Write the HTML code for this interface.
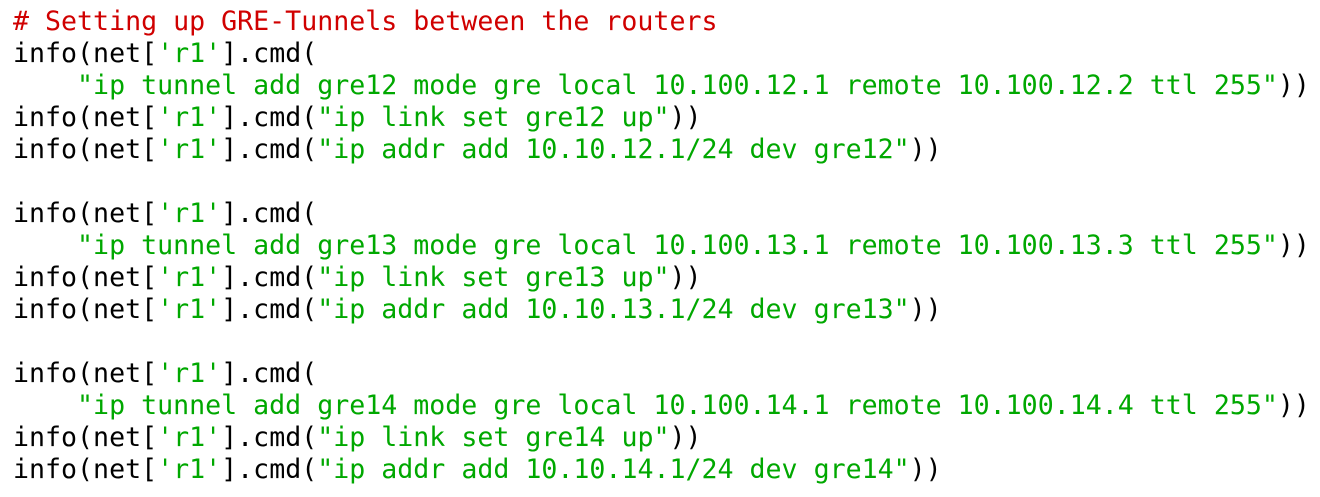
<!DOCTYPE html>
<html><head><meta charset="utf-8"><style>
html,body{margin:0;padding:0;background:#fff;width:1320px;height:497px;overflow:hidden}
pre{margin:0;position:absolute;left:13px;top:6px;font-family:"DejaVu Sans Mono","Liberation Mono",monospace;font-size:26.6px;line-height:32px;color:#000}
.c{color:#d00000}.s{color:#00a800}
</style></head><body><pre><span class="c"># Setting up GRE-Tunnels between the routers</span>
info(net[<span class="s">'r1'</span>].cmd(
    <span class="s">"ip tunnel add gre12 mode gre local 10.100.12.1 remote 10.100.12.2 ttl 255"</span>))
info(net[<span class="s">'r1'</span>].cmd(<span class="s">"ip link set gre12 up"</span>))
info(net[<span class="s">'r1'</span>].cmd(<span class="s">"ip addr add 10.10.12.1/24 dev gre12"</span>))

info(net[<span class="s">'r1'</span>].cmd(
    <span class="s">"ip tunnel add gre13 mode gre local 10.100.13.1 remote 10.100.13.3 ttl 255"</span>))
info(net[<span class="s">'r1'</span>].cmd(<span class="s">"ip link set gre13 up"</span>))
info(net[<span class="s">'r1'</span>].cmd(<span class="s">"ip addr add 10.10.13.1/24 dev gre13"</span>))

info(net[<span class="s">'r1'</span>].cmd(
    <span class="s">"ip tunnel add gre14 mode gre local 10.100.14.1 remote 10.100.14.4 ttl 255"</span>))
info(net[<span class="s">'r1'</span>].cmd(<span class="s">"ip link set gre14 up"</span>))
info(net[<span class="s">'r1'</span>].cmd(<span class="s">"ip addr add 10.10.14.1/24 dev gre14"</span>))</pre></body></html>
